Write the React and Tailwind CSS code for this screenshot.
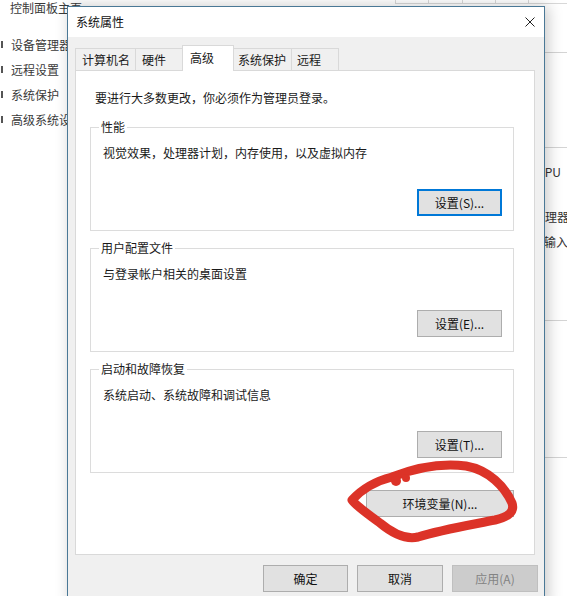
import React from "react";

function Tab({ children, cls }) {
  return (
    <div className={"flex items-center text-[12px] leading-[16px] border-[#d9d9d9] " + cls}>
      {children}
    </div>
  );
}

function GroupBox({ label, text, btn, focus }) {
  return (
    <div className="relative ml-[14px] w-[424px] h-[104px] border border-[#dcdcdc] flex flex-col">
      <div className="absolute left-[8px] top-[-9px] px-[2px] bg-white leading-[16px] text-[12px] text-[#1a1a1a]">
        {label}
      </div>
      <div className="pl-[12px] pt-[17px] leading-[16px] text-[12px] text-[#1a1a1a]">{text}</div>
      <div
        className={
          focus
            ? "self-end mr-[11px] mt-[28px] w-[85px] h-[27px] bg-[#e1e1e1] border-2 border-[#0078d7] flex items-center justify-center text-[12px] text-[#111]"
            : "self-end mr-[11px] mt-[28px] w-[85px] h-[27px] bg-[#e1e1e1] border border-[#adadad] flex items-center justify-center text-[12px] text-[#111]"
        }
      >
        {btn}
      </div>
    </div>
  );
}

export default function App() {
  return (
    <div className="relative w-[567px] h-[596px] overflow-hidden bg-white [font-family:'Noto_Sans_CJK_SC','Noto_Sans',sans-serif] text-[12px]">
      {/* background window */}
      <div className="flex h-full">
        <div className="w-[200px] shrink-0 flex flex-col text-[12px] text-[#3a3a3a]">
          <div className="h-[16px] leading-[16px] pl-[10px]">控制面板主页</div>
          <div className="mt-[16px] flex flex-col">
            {["设备管理器", "远程设置", "系统保护", "高级系统设置"].map((t) => (
              <div key={t} className="h-[25px] flex items-center">
                <div className="ml-[1px] w-[2px] h-[7px] bg-[#555]" />
                <div className="ml-[8px] leading-[16px]">{t}</div>
              </div>
            ))}
          </div>
        </div>
        <div className="flex-1 flex flex-col">
          <div className="ml-[195px] flex h-[4px] border-b border-[#d8d8d8]">
            <div className="w-[33px] border-l border-[#d8d8d8]" />
            <div className="w-[34px] border-l border-[#d8d8d8]" />
            <div className="w-[33px] border-l border-[#d8d8d8]" />
            <div className="w-[33px] border-l border-[#d8d8d8]" />
            <div className="flex-1 border-l border-[#d8d8d8]" />
          </div>
          <div className="ml-[330px] flex flex-col text-[12px] text-[#333] leading-[16px] whitespace-nowrap">
            <div className="mt-[48px] border-t border-[#d4d4d4]" />
            <div className="mt-[94px] border-t border-[#d4d4d4]" />
            <div className="mt-[16px] pl-[7px]">CPU</div>
            <div className="mt-[29px] pl-[3px]">处理器</div>
            <div className="mt-[9px] pl-[14px]">输入</div>
            <div className="mt-[70px] border-t border-[#d4d4d4]" />
            <div className="mt-[136px] border-t border-[#d4d4d4]" />
          </div>
        </div>
      </div>

      {/* dialog */}
      <div className="absolute left-[67px] top-[6px] w-[478px] h-[600px] border border-[#4a7896] bg-[#f0f0f0] flex flex-col shadow-[3px_0_14px_rgba(0,0,0,0.22)]">
        <div className="h-[30px] shrink-0 bg-white flex items-center justify-between pl-[8px] pr-[9px]">
          <span className="text-[12px] leading-[16px] text-[#111]">系统属性</span>
          <svg width="10" height="10" viewBox="0 0 10 10">
            <path d="M0.5 0.5 L9.5 9.5 M9.5 0.5 L0.5 9.5" stroke="#222" strokeWidth="1" />
          </svg>
        </div>
        <div className="flex-1 flex flex-col pl-[7px] pr-[5px] pt-[8px]">
          <div className="relative z-10 flex items-end h-[25px] text-[#1a1a1a]">
            <Tab cls="w-[60px] h-[22px] pl-[6px] border-t border-l bg-[#f0f0f0]">计算机名</Tab>
            <Tab cls="w-[47px] h-[22px] pl-[6px] border-t border-l bg-[#f0f0f0]">硬件</Tab>
            <Tab cls="w-[52px] h-[26px] -mb-px pb-[2px] pl-[7px] border-t border-l border-r bg-white">高级</Tab>
            <Tab cls="w-[58px] h-[22px] pl-[4px] border-t border-r bg-[#f0f0f0]">系统保护</Tab>
            <Tab cls="w-[47px] h-[22px] pl-[5px] border-t border-r bg-[#f0f0f0]">远程</Tab>
          </div>
          <div className="w-[460px] h-[485px] shrink-0 bg-white border border-[#d9d9d9] flex flex-col">
            <div className="mt-[19px] pl-[19px] leading-[16px] text-[12px] text-[#1a1a1a]">
              要进行大多数更改，你必须作为管理员登录。
            </div>
            <div className="mt-[21px]">
              <GroupBox label="性能" text="视觉效果，处理器计划，内存使用，以及虚拟内存" btn="设置(S)..." focus />
            </div>
            <div className="mt-[17px]">
              <GroupBox label="用户配置文件" text="与登录帐户相关的桌面设置" btn="设置(E)..." />
            </div>
            <div className="mt-[17px]">
              <GroupBox label="启动和故障恢复" text="系统启动、系统故障和调试信息" btn="设置(T)..." />
            </div>
            <div className="self-end mr-[20px] mt-[17px] w-[148px] h-[27px] bg-[#e1e1e1] border border-[#adadad] flex items-center justify-center text-[12px] text-[#111]">
              环境变量(N)...
            </div>
          </div>
          <div className="mt-[10px] flex justify-end gap-[9px] mr-[1px]">
            <div className="w-[85px] h-[27px] bg-[#e1e1e1] border border-[#adadad] flex items-center justify-center text-[12px] text-[#111]">
              确定
            </div>
            <div className="w-[86px] h-[27px] bg-[#e1e1e1] border border-[#adadad] flex items-center justify-center text-[12px] text-[#111]">
              取消
            </div>
            <div className="w-[86px] h-[27px] bg-[#cccccc] border border-[#bfbfbf] flex items-center justify-center text-[12px] text-[#838383]">
              应用(A)
            </div>
          </div>
        </div>
      </div>

      {/* red hand-drawn annotation */}
      <svg className="absolute left-0 top-0 pointer-events-none" width="567" height="596" viewBox="0 0 567 596">
        <path
          d="M352 500 C362 489 376 481 392 477 C415 468 442 463 466 466 C489 470 505 487 512 503 C515 512 508 517 495 520 C470 525 440 530 418 537 C405 540 392 533 380 523 C368 514 356 506 352 500 Z"
          fill="none"
          stroke="#dc3328"
          strokeWidth="9"
          strokeLinejoin="round"
          strokeLinecap="round"
        />
        <circle cx="396" cy="481" r="5" fill="#dc3328" />
        <circle cx="406" cy="478" r="4" fill="#dc3328" />
      </svg>
    </div>
  );
}
